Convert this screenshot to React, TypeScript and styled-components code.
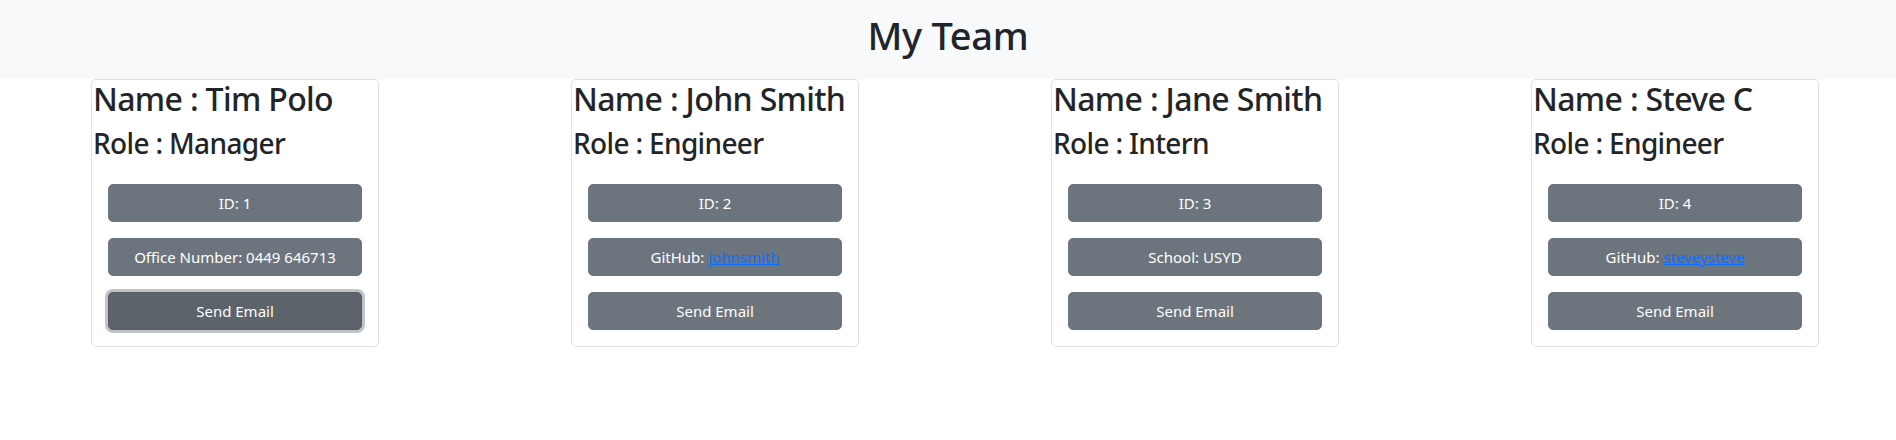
import React from "react";
import styled, { createGlobalStyle } from "styled-components";

const GlobalStyle = createGlobalStyle`
  * { box-sizing: border-box; }
  body {
    margin: 0;
    font-family: "Noto Sans", "Open Sans", sans-serif;
    font-size: 16px;
    line-height: 1.5;
    color: #212529;
    background: #fff;
  }
`;

const Header = styled.header`
  background: #f8f9fa;
  height: 79px;
  padding-top: 12px;
  text-align: center;
`;

const Title = styled.h1`
  margin: 0;
  font-size: 38px;
  line-height: 46px;
  font-weight: 500;
  letter-spacing: -0.3px;
  color: #212529;
`;

const CardRow = styled.main`
  display: flex;
  gap: 192px;
  padding-left: 91px;
`;

const Card = styled.section`
  width: 288px;
  border: 1px solid rgba(0, 0, 0, 0.125);
  border-radius: 5px;
  background: #fff;
  padding-bottom: 16px;
`;

const Name = styled.h2`
  margin: 0 0 8px 1px;
  font-size: 32px;
  line-height: 38px;
  font-weight: 500;
  letter-spacing: -0.65px;
  white-space: nowrap;
`;

const Role = styled.h3`
  margin: 0 0 8px 1px;
  font-size: 28px;
  line-height: 34px;
  font-weight: 500;
  letter-spacing: -0.65px;
`;

const Buttons = styled.div`
  display: flex;
  flex-direction: column;
  gap: 16px;
  padding: 16px 16px 0;
`;

const InfoButton = styled.button<{ $focused?: boolean }>`
  height: 38px;
  width: 100%;
  border: 1px solid ${(p) => (p.$focused ? "#565e64" : "#6c757d")};
  border-radius: 5px;
  background: ${(p) => (p.$focused ? "#5c636a" : "#6c757d")};
  color: #fff;
  font-family: inherit;
  font-size: 15px;
  line-height: 22px;
  padding: 0 12px;
  box-shadow: ${(p) => (p.$focused ? "0 0 0 3px rgba(130, 138, 145, 0.5)" : "none")};
  cursor: pointer;
`;

const Link = styled.a`
  color: #0d6efd;
  text-decoration: underline;
`;

type Member = {
  name: string;
  role: string;
  id: number;
  extra: React.ReactNode;
};

const team: Member[] = [
  { name: "Tim Polo", role: "Manager", id: 1, extra: "Office Number: 0449 646713" },
  {
    name: "John Smith",
    role: "Engineer",
    id: 2,
    extra: (
      <>
        GitHub: <Link href="#">johnsmith</Link>
      </>
    ),
  },
  { name: "Jane Smith", role: "Intern", id: 3, extra: "School: USYD" },
  {
    name: "Steve C",
    role: "Engineer",
    id: 4,
    extra: (
      <>
        GitHub: <Link href="#">steveysteve</Link>
      </>
    ),
  },
];

export default function App() {
  return (
    <>
      <GlobalStyle />
      <Header>
        <Title>My Team</Title>
      </Header>
      <CardRow>
        {team.map((m, i) => (
          <Card key={m.id}>
            <Name>Name : {m.name}</Name>
            <Role>Role : {m.role}</Role>
            <Buttons>
              <InfoButton>ID: {m.id}</InfoButton>
              <InfoButton>{m.extra}</InfoButton>
              <InfoButton $focused={i === 0}>Send Email</InfoButton>
            </Buttons>
          </Card>
        ))}
      </CardRow>
    </>
  );
}
